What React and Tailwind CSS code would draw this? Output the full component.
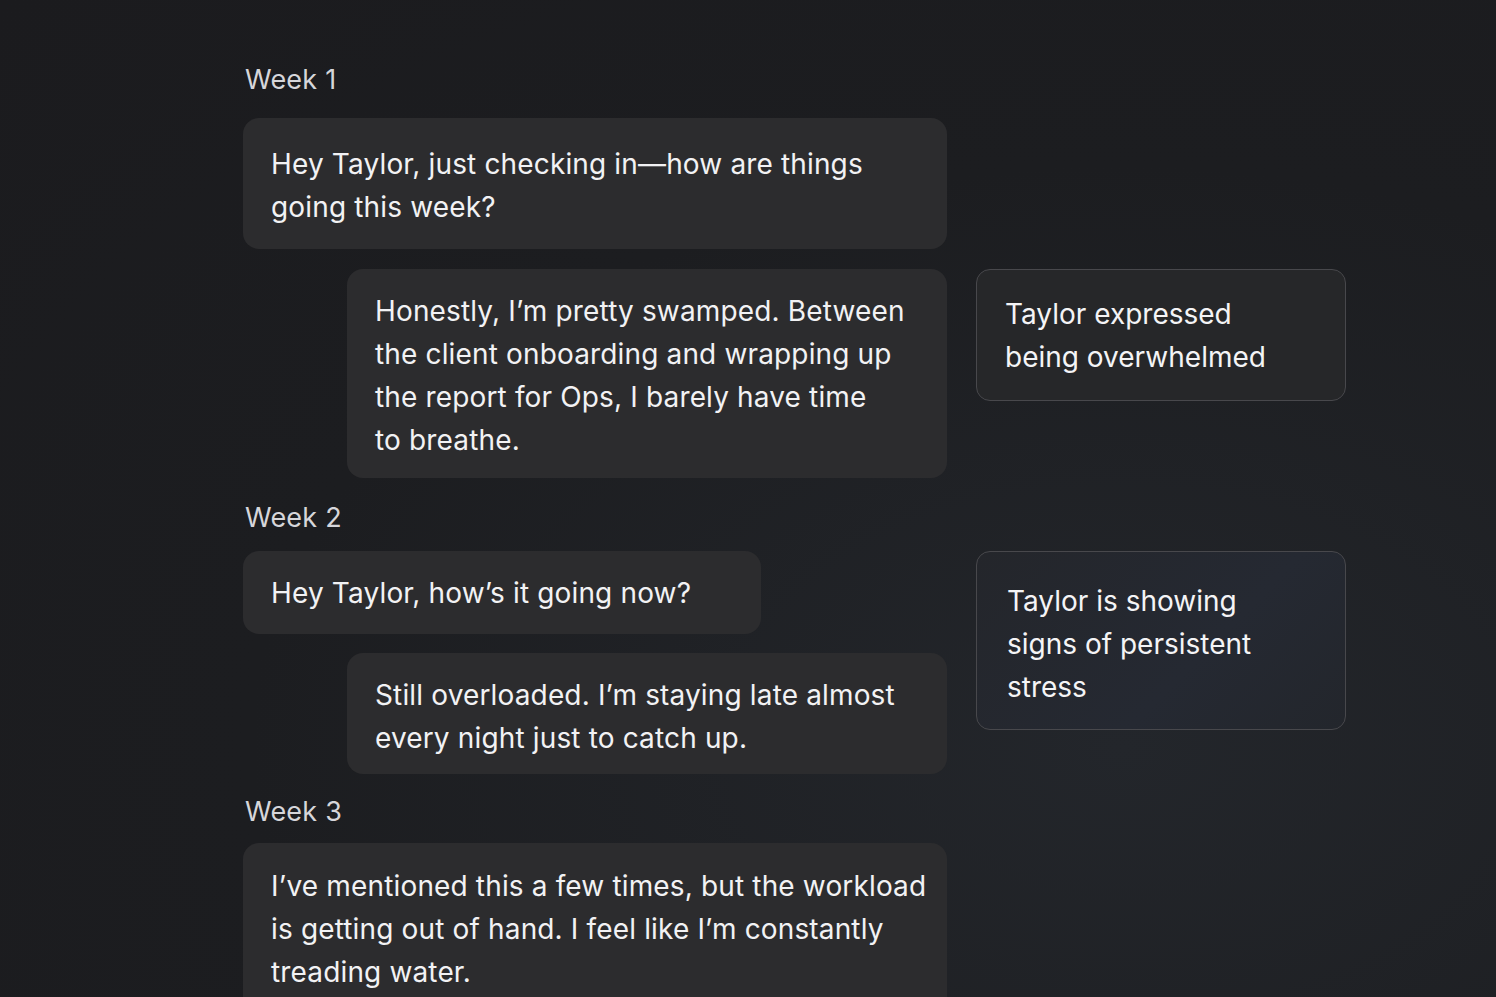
import React from "react";

function Bubble({ children, className = "" }) {
  return (
    <div
      className={`bg-[#2c2c2e] rounded-[16px] pl-[28px] pr-2 py-5 text-[28px] leading-[43px] tracking-[0.15px] text-[#f2f2f4] ${className}`}
      style={{ fontFamily: "Inter, Roboto, 'Liberation Sans', sans-serif" }}
    >
      {children}
    </div>
  );
}

function Card({ children, className = "" }) {
  return (
    <div
      className={`w-[370px] shrink-0 rounded-[14px] border border-[#48484c] text-[28px] leading-[43px] text-[#f4f4f6] ${className}`}
      style={{ fontFamily: "Inter, 'Liberation Sans', Arial, sans-serif" }}
    >
      {children}
    </div>
  );
}

function WeekLabel({ children, className = "" }) {
  return (
    <div
      className={`pl-[2px] text-[27px] leading-[36px] tracking-[0.2px] text-[#d6d6da] ${className}`}
      style={{ fontFamily: "Inter, Roboto, 'Liberation Sans', sans-serif" }}
    >
      {children}
    </div>
  );
}

export default function App() {
  return (
    <div className="w-[1496px] h-[997px] overflow-hidden bg-[radial-gradient(ellipse_at_75%_75%,#23262b_0%,#1c1d20_55%,#1b1b1e_100%)]">
      <div className="pl-[243px] pt-[62px] flex flex-col">
        <WeekLabel>Week 1</WeekLabel>
        <Bubble className="w-[704px] mt-5 !pt-[25px]">
          Hey Taylor, just checking in—how are things
          <br />
          going this week?
        </Bubble>
        <div className="flex gap-[29px] mt-[20px]">
          <Bubble className="w-[600px] ml-[104px] !pt-[21px] !pb-[16px]">
            Honestly, I’m pretty swamped. Between
            <br />
            the client onboarding and wrapping up
            <br />
            the report for Ops, I barely have time
            <br />
            to breathe.
          </Bubble>
          <Card className="h-[132px] bg-[#262729] pl-[28px] pt-[23px]">
            Taylor expressed
            <br />
            being overwhelmed
          </Card>
        </div>

        <WeekLabel className="mt-[22px]">Week 2</WeekLabel>
        <div className="flex gap-[29px] mt-[15px]">
          <div className="w-[704px] flex flex-col">
            <Bubble className="w-[518px] !pt-[21px] !pb-[19px]">Hey Taylor, how’s it going now?</Bubble>
            <Bubble className="w-[600px] ml-[104px] mt-[19px] !pt-[21px] !pb-[14px]">
              Still overloaded. I’m staying late almost
              <br />
              every night just to catch up.
            </Bubble>
          </div>
          <Card className="h-[179px] bg-[linear-gradient(135deg,#24262b_0%,#252932_60%,#23262c_100%)] pl-[30px] pt-[28px] self-start">
            Taylor is showing
            <br />
            signs of persistent
            <br />
            stress
          </Card>
        </div>

        <WeekLabel className="mt-[20px]">Week 3</WeekLabel>
        <Bubble className="w-[704px] mt-[13px] !pt-[22px]">
          I’ve mentioned this a few times, but the workload
          <br />
          is getting out of hand. I feel like I’m constantly
          <br />
          treading water.
        </Bubble>
      </div>
    </div>
  );
}
